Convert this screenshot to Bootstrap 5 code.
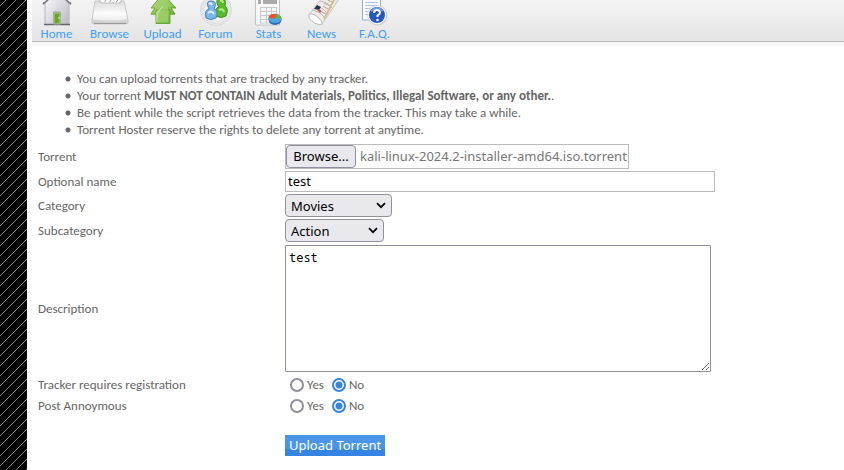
<!DOCTYPE html>
<html lang="en">
<head>
<meta charset="utf-8">
<meta name="viewport" content="width=device-width, initial-scale=1">
<title>Upload Torrent</title>
<link rel="stylesheet" href="https://cdn.jsdelivr.net/npm/bootstrap@5.3.0/dist/css/bootstrap.min.css">
<style>
body{font-family:Carlito,Calibri,Lato,sans-serif;font-size:13px;line-height:17px;color:#666;background:#fff}
.stripes{width:27px;background:linear-gradient(135deg,#000 46%,#858585 46% 54%,#000 54%) 0 6px/10px 10px}
.page{margin-left:5px;min-width:0}
.topbar{background:linear-gradient(#f4f4f4,#e4e4e4);border-bottom:1px solid #b8b8b8;box-shadow:0 4px 0 #f7f7f7;height:42px}
.topbar a{width:49px;color:#3f9dfa;line-height:15px}
.topbar svg{width:40px;height:26px;display:block}
.rules{margin:28px 0 5px;padding-left:33px;list-style:none}
.rules li{padding-left:12px;background:radial-gradient(circle at 3px 9px,#666 2px,transparent 3px)}
.fields{padding-left:6px}
.line{display:grid;grid-template-columns:247px minmax(0,1fr);align-items:center;min-height:25px}
.line-file{min-height:26px}
.line-name{min-height:24px}
.line-radio{min-height:21px}
.line-area{min-height:131px}
.ui{font-family:"Noto Sans",sans-serif;font-size:13px;line-height:18px;color:#000}
.filebox{width:344px;max-width:100%;height:25px;border:1px solid #bbb;white-space:nowrap;overflow:hidden}
.filename{color:#777}
.grey{background:#e9e9ed;border:1px solid #8f8f9d;border-radius:4px}
.pick{height:23px;width:70px;padding:0}
.namebox{width:430px;max-width:100%;height:21px;border:1px solid #bbb;padding:0 2px}
.drop{height:23px;padding:0 5px;appearance:none;background:#e9e9ed url("data:image/svg+xml,%3Csvg xmlns='http://www.w3.org/2000/svg' width='10' height='7'%3E%3Cpath d='M1 1.2l4 4 4-4' fill='none' stroke='%23000' stroke-width='1.7'/%3E%3C/svg%3E") no-repeat right 5px center}
.drop-cat{width:107px}
.drop-sub{width:99px}
.area{display:block;width:426px;max-width:100%;height:127px;padding:3px;border:1px solid #8f8f9d;border-radius:1px;font-family:"Noto Sans Mono","DejaVu Sans Mono",monospace;font-size:12px;line-height:18px;color:#000}
.dot{appearance:none;width:14px;height:14px;margin:0;border:2px solid #8f8f9d;border-radius:50%;background:#fff}
.dot:checked{border-color:#3584e4;background:radial-gradient(circle,#3584e4 0 3px,#fff 4px)}
.radios{padding-left:5px}
.choice{display:flex;align-items:center;gap:3px}
.send{height:21px;padding:0 4px;border:0;background:linear-gradient(#4b95e8 66%,#3584e4 66%);line-height:21px}
.send-line{margin-top:17px}
</style>
<script src="https://cdn.jsdelivr.net/npm/bootstrap@5.3.0/dist/js/bootstrap.bundle.min.js"></script>
</head>
<body>
<div class="d-flex min-vh-100">
<div class="stripes flex-shrink-0"></div>
<div class="page flex-grow-1">
<nav class="topbar d-flex gap-1" aria-label="Main">
<a href="#" class="d-flex flex-column align-items-center text-decoration-none"><svg viewBox="0 0 40 26"><defs><linearGradient id="wall" x2="1" y2="1"><stop stop-color="#fff"/><stop offset="1" stop-color="#b9b9c4"/></linearGradient></defs><path d="M8 3 20-8 32 3V24.500H8Z" fill="url(#wall)" stroke="#b3b3bd"/><path d="M7 24.500H33" stroke="#64646d" stroke-width="1.500"/><path d="M6 4 20-9 34 4" fill="none" stroke="#777781" stroke-width="2"/><path d="M7 2 20-10 33 2" fill="none" stroke="#eee" stroke-width="1"/><path d="M16.500 12h7v12h-7z" fill="#92bd50" stroke="#aaa"/><path d="M18 14h4v9h-4z" fill="#69a626"/><circle cx="22" cy="18" r=".8" fill="#fff"/></svg><span>Home</span></a>
<a href="#" class="d-flex flex-column align-items-center text-decoration-none"><svg viewBox="0 0 40 26"><defs><linearGradient id="tray" x2="0" y2="1"><stop stop-color="#dcdcdc"/><stop offset=".55" stop-color="#fafafa"/><stop offset="1" stop-color="#c7c7c7"/></linearGradient></defs><path d="M5 1H34L38 20Q39 24 35 24H5Q1 24 2 20Z" fill="url(#tray)" stroke="#c9c9c9"/><path d="M9-1h23l-2 4H11Z" fill="#f9f9f9" stroke="#bbb"/><path d="M15 2l1-3M20 2l2-4M26 2l3-3" stroke="#a2a2a2"/><path d="M4 13Q20 9 36 13L37 19Q20 22 3 19Z" fill="#fff" opacity=".5"/><path d="M4 23.500H36" stroke="#999"/></svg><span>Browse</span></a>
<a href="#" class="d-flex flex-column align-items-center text-decoration-none"><svg viewBox="0 0 40 26"><defs><linearGradient id="leaf" x2="1" y2="1"><stop stop-color="#c6e59c"/><stop offset="1" stop-color="#70b12e"/></linearGradient></defs><path d="M20 1 32 14H27V23.500H13V14H8Z" fill="url(#leaf)" stroke="#68a437"/><path d="M20-6 33 8H28L32 14H27V10H13V14H8L12 8H8Z" fill="url(#leaf)" stroke="#68a437"/><path d="M20-3 29 6H25V22H15V6H11Z" fill="#9dcf68" opacity=".75"/><path d="M14 12V22M15 12 20 6" stroke="#d5eeb9"/></svg><span>Upload</span></a>
<a href="#" class="d-flex flex-column align-items-center text-decoration-none"><svg viewBox="0 0 40 26"><defs><radialGradient id="globe"><stop offset=".4" stop-color="#fff"/><stop offset=".9" stop-color="#e1e1e1"/><stop offset="1" stop-color="#fff"/></radialGradient></defs><circle cx="20" cy="10" r="15.500" fill="url(#globe)" stroke="#d5d5d5"/><path d="M20 16Q18 8 23 7Q18 0 24-2Q31-2 29 6Q33 8 30 16Q25 19 20 16Z" fill="#5abb28" stroke="#399617"/><path d="M24 1Q27 0 27 3M23 10Q27 8 28 12" fill="none" stroke="#b5ef83" stroke-width="2"/><path d="M10 18Q8 10 13 9Q9 1 15 1Q22 1 18 9Q23 11 20 18Q15 21 10 18Z" fill="#78b8ea" stroke="#4384c5"/><path d="M13 4Q15 2 16 5M12 13Q16 10 18 14" fill="none" stroke="#dff3ff" stroke-width="2"/></svg><span>Forum</span></a>
<a href="#" class="d-flex flex-column align-items-center text-decoration-none"><svg viewBox="0 0 40 26"><path d="M6.500-2h24v27h-24z" fill="#f8f8f8" stroke="#c2c2c2"/><path d="M9 0h3v4H9zM14 0h14v4H14z" fill="#aaa"/><path d="M11 7.500H28M11 11.500H28M11 15.500H28M11 19.500H28M11.500 7v16M17.500 7v16M22.500 7v16M27.500 7v12M11 23H23" fill="none" stroke="#c9c9c9"/><ellipse cx="26" cy="20" rx="6.500" ry="5" fill="#286bb3"/><ellipse cx="26" cy="18.500" rx="6.500" ry="4.500" fill="#55a3dc"/><path d="M26 18.500V14Q32 14 32.500 18.500Z" fill="#63b548"/><path d="M26 18.500 19.500 18Q20 13 28 14Z" fill="#e85133"/></svg><span>Stats</span></a>
<a href="#" class="d-flex flex-column align-items-center text-decoration-none"><svg viewBox="0 0 40 26"><path d="M7 15 22-5 37-1 20 24Q13 26 7 15Z" fill="#eeeae5" stroke="#c8c5c2"/><path d="M7 14Q14 13 20 22L20 24.500Q12 25 7 18Z" fill="#fff" stroke="#bbb"/><path d="M11 10Q19 12 23 18M14 6Q22 8 26 14M18 1Q26 2 30 8" fill="none" stroke="#c5c0bb"/><path d="m15 5 4 2-2 3-5-1Z" fill="#253556"/><path d="m17 9 3 2-2 2-3-3Z" fill="#c76050"/><path d="m22 3 6 3M21 6l5 3M20 12l4 2M24-1l6 3" stroke="#aaa" stroke-width="1"/><path d="m32 0-10 19" stroke="#d7bc91" stroke-width="2"/></svg><span>News</span></a>
<a href="#" class="d-flex flex-column align-items-center text-decoration-none"><svg viewBox="0 0 40 26"><path d="M7.500-2h18v22h-18z" fill="#fafdff" stroke="#8bafe0"/><path d="M10 2.500H23M10 5.500H22M10 8.500H17M10 11.500H15M10 14.500H14" stroke="#a9c5e9"/><circle cx="22.500" cy="15.500" r="10" fill="#aaa" opacity=".4"/><circle cx="22" cy="15" r="9.500" fill="#fff" stroke="#bbb" stroke-width=".5"/><circle cx="22" cy="15" r="8" fill="#2458bd"/><path d="M16 11Q22 5 28 11" fill="none" stroke="#719be0" stroke-width="2"/><path d="M19 13Q19 10 22 10Q25 10 25 12.500Q25 14 22.500 15.500V17" fill="none" stroke="#fff" stroke-width="2"/><circle cx="22.500" cy="20" r="1.300" fill="#fff"/></svg><span>F.A.Q.</span></a>
</nav>
<main>
<ul class="rules">
<li>You can upload torrents that are tracked by any tracker.</li>
<li>Your torrent <b>MUST NOT CONTAIN Adult Materials, Politics, Illegal Software, or any other.</b>.</li>
<li>Be patient while the script retrieves the data from the tracker. This may take a while.</li>
<li>Torrent Hoster reserve the rights to delete any torrent at anytime.</li>
</ul>
<form class="fields">
<div class="line line-file"><label for="torrent">Torrent</label><div class="filebox ui d-flex align-items-center"><button type="button" id="torrent" class="grey ui pick flex-shrink-0">Browse...</button><span class="ps-1 filename">kali-linux-2024.2-installer-amd64.iso.torrent</span></div></div>
<div class="line line-name"><label for="name">Optional name</label><input id="name" type="text" class="namebox ui" value="test"></div>
<div class="line"><label for="cat">Category</label><div class="d-flex"><select id="cat" class="grey ui drop drop-cat"><option>Movies</option></select></div></div>
<div class="line"><label for="sub">Subcategory</label><div class="d-flex"><select id="sub" class="grey ui drop drop-sub"><option>Action</option></select></div></div>
<div class="line line-area"><label for="desc">Description</label><textarea id="desc" class="area">test</textarea></div>
<div class="line line-radio" role="radiogroup" aria-labelledby="reg"><span id="reg">Tracker requires registration</span><div class="radios d-flex gap-2"><label class="choice"><input class="dot" type="radio" name="reg">Yes</label><label class="choice"><input class="dot" type="radio" name="reg" checked>No</label></div></div>
<div class="line line-radio" role="radiogroup" aria-labelledby="anon"><span id="anon">Post Annoymous</span><div class="radios d-flex gap-2"><label class="choice"><input class="dot" type="radio" name="anon">Yes</label><label class="choice"><input class="dot" type="radio" name="anon" checked>No</label></div></div>
<div class="line send-line"><span></span><div class="d-flex"><button type="submit" class="send ui text-white">Upload Torrent</button></div></div>
</form>
</main>
</div>
</div>
</body>
</html>
